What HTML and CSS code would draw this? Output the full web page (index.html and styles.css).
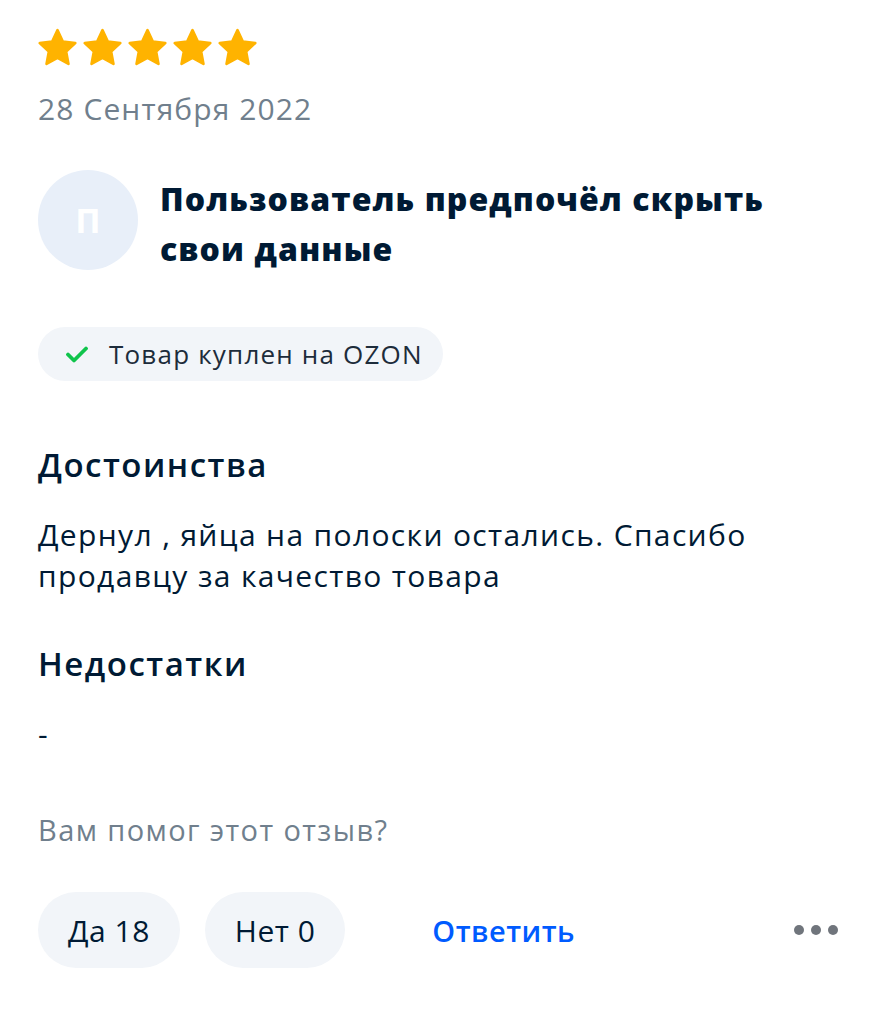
FILE: index.html
```html
<!DOCTYPE html>
<html lang="ru">
<head>
    <meta charset="UTF-8">
    <meta name="viewport" content="width=device-width, initial-scale=1.0">
    <title>Отзыв</title>
    <link rel="stylesheet" href="styles.css">
</head>
<body>
    <div class="review">
        <div class="stars">
            <svg class="star" viewBox="0 0 24 23.4"><polygon points="12,1.3 15.29,8.27 22.94,9.25 17.33,14.53 18.76,22.1 12,18.4 5.24,22.1 6.67,14.53 1.06,9.25 8.71,8.27"/></svg>
            <svg class="star" viewBox="0 0 24 23.4"><polygon points="12,1.3 15.29,8.27 22.94,9.25 17.33,14.53 18.76,22.1 12,18.4 5.24,22.1 6.67,14.53 1.06,9.25 8.71,8.27"/></svg>
            <svg class="star" viewBox="0 0 24 23.4"><polygon points="12,1.3 15.29,8.27 22.94,9.25 17.33,14.53 18.76,22.1 12,18.4 5.24,22.1 6.67,14.53 1.06,9.25 8.71,8.27"/></svg>
            <svg class="star" viewBox="0 0 24 23.4"><polygon points="12,1.3 15.29,8.27 22.94,9.25 17.33,14.53 18.76,22.1 12,18.4 5.24,22.1 6.67,14.53 1.06,9.25 8.71,8.27"/></svg>
            <svg class="star" viewBox="0 0 24 23.4"><polygon points="12,1.3 15.29,8.27 22.94,9.25 17.33,14.53 18.76,22.1 12,18.4 5.24,22.1 6.67,14.53 1.06,9.25 8.71,8.27"/></svg>
        </div>

        <div class="date">28 Сентября 2022</div>

        <div class="author">
            <div class="avatar">П</div>
            <div class="author-name">Пользователь предпочёл скрыть свои данные</div>
        </div>

        <div class="badge">
            <svg class="check" viewBox="0 0 24 18"><path d="M3 9.5l6 6L21 3.5" /></svg>
            <span>Товар куплен на OZON</span>
        </div>

        <h2 class="section-title">Достоинства</h2>
        <p class="section-text">Дернул , яйца на полоски остались. Спасибо продавцу за качество товара</p>

        <h2 class="section-title">Недостатки</h2>
        <p class="section-text">-</p>

        <div class="question">Вам помог этот отзыв?</div>

        <div class="actions">
            <button class="pill">Да 18</button>
            <button class="pill">Нет 0</button>
            <button class="reply">Ответить</button>
            <div class="more"><span></span><span></span><span></span></div>
        </div>
    </div>
</body>
</html>
```

FILE: styles.css
```css
body {
    margin: 0;
    background-color: #fff;
    color: #001a34;
    font-family: "Open Sans", "Noto Sans", sans-serif;
}
.review {
    padding: 28px 38px 0 38px;
}
.stars {
    display: flex;
    gap: 6px;
}
.star {
    width: 39px;
    height: 38px;
    fill: #ffb300;
    stroke: #ffb300;
    stroke-width: 1.6;
    stroke-linejoin: round;
}
.date {
    margin-top: 23px;
    font-size: 30px;
    line-height: 40px;
    letter-spacing: 1.1px;
    color: #707f8d;
}
.author {
    display: flex;
    align-items: flex-start;
    gap: 22px;
    margin-top: 41px;
}
.avatar {
    flex: none;
    width: 100px;
    height: 100px;
    border-radius: 50%;
    background-color: #e8eff9;
    color: #fff;
    font-size: 34px;
    font-weight: 700;
    display: flex;
    align-items: center;
    justify-content: center;
}
.author-name {
    width: 640px;
    font-size: 32px;
    font-weight: 800;
    line-height: 50px;
    letter-spacing: 1.1px;
    margin-top: 4px;
}
.badge {
    display: inline-flex;
    align-items: center;
    gap: 20px;
    height: 54px;
    margin-top: 53px;
    padding: 0 20px 0 27px;
    border-radius: 27px;
    background-color: #f2f5f9;
    font-size: 26px;
    letter-spacing: 1.2px;
    color: #1d2c3b;
}
.check {
    width: 24px;
    height: 18px;
    fill: none;
    stroke: #10c44c;
    stroke-width: 3.8;
    stroke-linecap: round;
    stroke-linejoin: round;
}
.section-title {
    margin: 64px 0 0 0;
    font-size: 33px;
    font-weight: 600;
    line-height: 40px;
    letter-spacing: 1.5px;
}
.section-text {
    margin: 29px 0 0 0;
    width: 760px;
    font-size: 30px;
    line-height: 41px;
    letter-spacing: 1.35px;
}
.section-text + .section-title {
    margin-top: 48px;
}
.question {
    margin-top: 56px;
    font-size: 29px;
    letter-spacing: 1.4px;
    color: #707f8d;
}
.actions {
    display: flex;
    align-items: center;
    gap: 25px;
    margin-top: 43px;
}
.pill {
    height: 76px;
    padding: 0 30px;
    border: none;
    border-radius: 38px;
    background-color: #f2f5f9;
    color: #001a34;
    font-family: inherit;
    font-size: 30px;
    letter-spacing: 0.5px;
}
.reply {
    margin-left: 62px;
    border: none;
    background: none;
    padding: 0;
    color: #005bff;
    font-family: inherit;
    font-size: 29px;
    font-weight: 600;
    letter-spacing: 0.5px;
}
.more {
    display: flex;
    gap: 7px;
    margin-left: auto;
    margin-right: 19px;
}
.more span {
    width: 10px;
    height: 10px;
    border-radius: 50%;
    background-color: #70757c;
}
```
